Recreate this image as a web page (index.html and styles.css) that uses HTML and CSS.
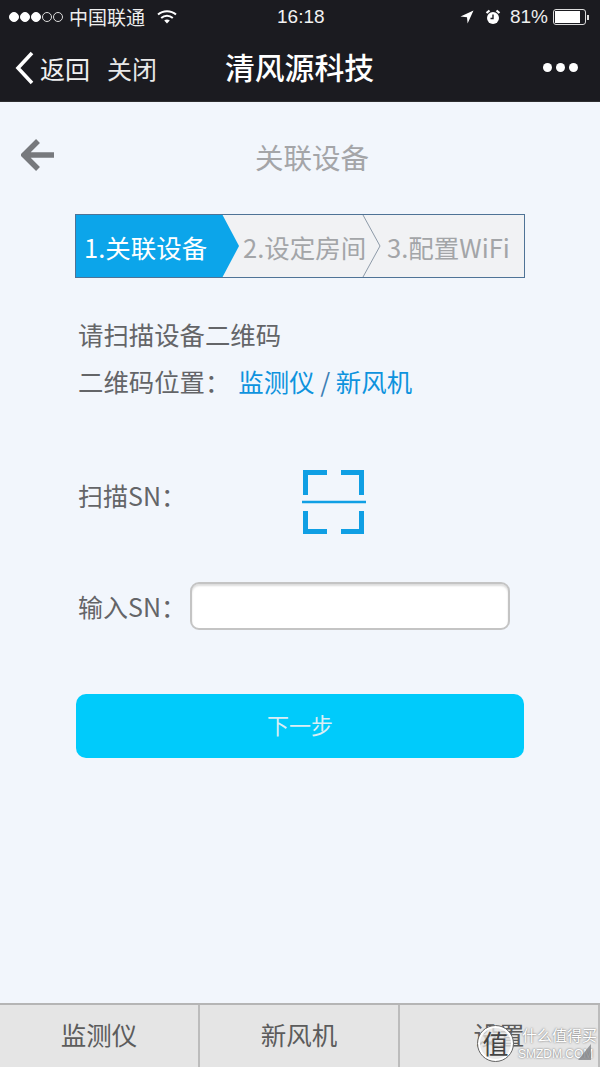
FILE: index.html
```html
<!DOCTYPE html>
<html lang="zh-CN">
<head>
<meta charset="utf-8">
<title>关联设备</title>
<link rel="stylesheet" href="styles.css">
</head>
<body>
<div class="phone">
  <header class="top">
    <div class="status">
      <div class="status-left">
        <span class="signal"><i class="on"></i><i class="on"></i><i class="on"></i><i></i><i></i></span>
        <span class="carrier">中国联通</span>
        <svg class="wifi" width="20" height="16" viewBox="0 0 20 16"><path d="M1 5.5C6 1 14 1 19 5.5" fill="none" stroke="#fff" stroke-width="2"/><path d="M4.2 9C7.6 6 12.4 6 15.8 9" fill="none" stroke="#fff" stroke-width="2"/><path d="M7.2 11.6C9 10.2 11 10.2 12.8 11.6L10 14.6Z" fill="#fff"/></svg>
      </div>
      <div class="clock">16:18</div>
      <div class="status-right">
        <svg class="loc" width="14" height="14" viewBox="0 0 14 14"><path d="M13.5.5 .5 6.5 7 7.2 7.6 13.5Z" fill="#fff"/></svg>
        <svg class="alarm" width="16" height="16" viewBox="0 0 16 16"><circle cx="8" cy="9" r="6" fill="#fff"/><path d="M1.5 4 4.5 1.5M14.5 4 11.5 1.5" stroke="#fff" stroke-width="2.2"/><path d="M8 5.5V9.5H5.5" fill="none" stroke="#1b1b20" stroke-width="1.4"/></svg>
        <span class="pct">81%</span>
        <span class="battery"><span class="charge"></span></span>
        <span class="nub"></span>
      </div>
    </div>
    <nav class="nav">
      <div class="nav-left">
        <svg class="chev" width="19" height="34" viewBox="0 0 19 34"><path d="M17 2 3 17 17 32" fill="none" stroke="#fff" stroke-width="3.6"/></svg>
        <span class="back">返回</span>
        <span class="close">关闭</span>
      </div>
      <div class="nav-title">清风源科技</div>
      <div class="more"><i></i><i></i><i></i></div>
    </nav>
  </header>

  <main class="main">
    <div class="page-head">
      <svg class="arrow" width="34" height="32" viewBox="0 0 34 32"><path d="M17 2 3 16 17 30M3 16H33" fill="none" stroke="#77797d" stroke-width="5.5"/></svg>
      <h1 class="page-title">关联设备</h1>
    </div>

    <div class="steps">
      <svg class="steps-bg" width="450" height="64" viewBox="0 0 450 64">
        <rect x=".5" y=".5" width="449" height="63" fill="#f1f2f4"/>
        <path d="M0 0H147L164 32 147 64H0Z" fill="#0ca5ea"/>
        <path d="M288 1 305 32 288 63" fill="none" stroke="#8d9aa8" stroke-width="1"/>
        <rect x=".5" y=".5" width="449" height="63" fill="none" stroke="#4f7396" stroke-width="1"/>
      </svg>
      <span class="step step-1">1.关联设备</span>
      <span class="step step-2">2.设定房间</span>
      <span class="step step-3">3.配置WiFi</span>
    </div>

    <p class="hint">请扫描设备二维码</p>
    <p class="where">二维码位置：<a class="link first">监测仪</a><span class="slash"> / </span><a class="link">新风机</a></p>

    <div class="scan-row">
      <span class="label label-scan">扫描SN：</span>
      <svg class="scan" width="66" height="68" viewBox="0 0 66 68">
        <path d="M26 4.500H4.500V27M40 4.500H60.500V27M4.500 43V63.500H26M60.500 43V63.500H40" fill="none" stroke="#109fe4" stroke-width="5"/>
        <path d="M1 34H65" stroke="#109fe4" stroke-width="2.500"/>
      </svg>
    </div>

    <div class="input-row">
      <span class="label">输入SN：</span>
      <input class="sn" type="text">
    </div>

    <button class="next">下一步</button>
  </main>

  <footer class="tabs">
    <div class="tab">监测仪</div>
    <div class="tab">新风机</div>
    <div class="tab">设置</div>
    <div class="mark">
      <span class="seal">值</span>
      <span class="mark-cn">什么值得买</span>
      <span class="mark-en">SMZDM.COM</span>
      <svg class="mark-tri" width="13" height="16" viewBox="0 0 13 16"><path d="M13 0V16H0Z" fill="#77797d"/></svg>
    </div>
  </footer>
</div>
</body>
</html>
```
FILE: styles.css
```css
* { box-sizing: border-box; }
html, body { margin: 0; padding: 0; }
body { font-family: "Noto Sans CJK SC", "Liberation Sans", sans-serif; }
.phone { width: 600px; height: 1067px; display: flex; flex-direction: column; background: #f2f6fc; overflow: hidden; }

.top { height: 102px; background: #1b1b20; color: #fff; flex: none; border-bottom: 1px solid #2e2e30; }
.status { height: 34px; padding: 0 11px 0 9px; display: flex; align-items: center; justify-content: space-between; position: relative; }
.status-left, .status-right { display: flex; align-items: center; }
.signal { display: flex; gap: 1px; margin-right: 6px; }
.signal i { width: 10px; height: 10px; border-radius: 50%; border: 1px solid #ddd; }
.signal i.on { background: #fff; border-color: #fff; }
.carrier { font-size: 19px; line-height: 34px; color: #eee; }
.wifi { margin-left: 12px; }
.clock { position: absolute; left: 277px; top: 0; font: 19px/34px "Liberation Sans", sans-serif; color: #f2f2f2; }
.loc { margin-right: 11px; }
.alarm { margin-right: 9px; }
.pct { font: 19px/34px "Liberation Sans", sans-serif; color: #eee; margin-right: 5px; }
.battery { width: 33px; height: 16px; border: 1px solid #ddd; border-radius: 3px; padding: 1px; display: block; }
.charge { display: block; width: 25px; height: 12px; background: #fff; }
.nub { width: 2px; height: 5px; background: #ddd; margin-left: 1px; }

.nav { height: 67px; padding: 0 22px 0 15px; display: flex; align-items: center; position: relative; justify-content: space-between; }
.nav-left { display: flex; align-items: center; }
.chev { margin-right: 6px; }
.back { font-size: 25px; line-height: 32px; color: #f0f0f0; }
.close { font-size: 25px; line-height: 32px; color: #e8e8e8; margin-left: 17px; }
.nav-title { position: absolute; left: 225px; top: 12px; font-size: 29.800px; line-height: 40px; font-weight: 500; }
.more { display: flex; gap: 4px; }
.more i { width: 9px; height: 9px; background: #fff; border-radius: 50%; display: block; }

.main { flex: 1; padding: 0 75px; position: relative; }
.page-head { height: 112px; position: relative; }
.arrow { position: absolute; left: -54px; top: 37px; }
.page-title { margin: 0; position: absolute; left: 180px; top: 35px; font-size: 28.500px; line-height: 40px; font-weight: 400; color: #a4a5a8; }

.steps { width: 450px; height: 64px; position: relative; display: flex; align-items: center; }
.steps-bg { position: absolute; left: 0; top: 0; }
.step { position: absolute; top: 15px; font-size: 25.500px; line-height: 36px; white-space: nowrap; color: #a3a5a8; }
.step-1 { left: 9px; color: #fff; }
.step-2 { left: 168px; }
.step-3 { left: 312px; }

.hint { margin: 38px 0 0 3px; font-size: 25.400px; line-height: 36px; color: #646568; }
.where { margin: 11px 0 0 3px; font-size: 25.400px; line-height: 36px; color: #646568; white-space: nowrap; }
.link { color: #0e93de; }
.link.first { margin-left: 8px; }
.slash { color: #3d7fb5; }

.scan-row { display: flex; align-items: center; margin: 69px 0 0 3px; height: 68px; }
.label { width: 112px; font-size: 25px; line-height: 36px; color: #646568; white-space: nowrap; }
.label-scan { margin-bottom: 14px; }
.scan { margin-left: 111px; }

.input-row { display: flex; align-items: center; margin: 45px 0 0 3px; height: 50px; }
.sn { width: 320px; height: 48px; border: 2px solid #c4c4c4; border-radius: 9px; background: #fff; box-shadow: inset 0 2px 2px #ddd; outline: none; }

.next { display: block; width: 448px; height: 64px; margin: 63px 0 0 1px; padding: 0 0 4px; background: #00cbfb; color: #dbeef5; border: none; border-radius: 10px; font: 22px "Noto Sans CJK SC", sans-serif; }

.tabs { height: 64px; flex: none; background: #e5e5e5; border-top: 2px solid #b5b5b5; display: flex; position: relative; }
.tab { flex: 1; text-align: center; font-size: 25.500px; line-height: 58px; color: #5c5c5c; border-right: 2px solid #bcbcbc; }
.tab:last-of-type { border-right: none; }
.mark { position: absolute; left: 476px; top: 19px; width: 124px; height: 43px; }
.seal { position: absolute; left: 1px; top: 1px; width: 37px; height: 37px; border-radius: 50%; border: 1px solid #666; box-shadow: inset 0 0 0 2px #fff; background: rgba(235,235,235,.75); color: #444; font-size: 26px; line-height: 33px; text-align: center; }
.mark-cn { position: absolute; left: 46px; top: 0; font-size: 15px; line-height: 22px; color: #fff; white-space: nowrap; text-shadow: 0 0 2px #555; }
.mark-en { position: absolute; left: 42px; top: 22px; font: 12px/16px "Liberation Sans", sans-serif; color: #fff; white-space: nowrap; text-shadow: 0 0 2px #555; }
.mark-tri { position: absolute; left: 102px; top: 20px; opacity: .7; }
```
